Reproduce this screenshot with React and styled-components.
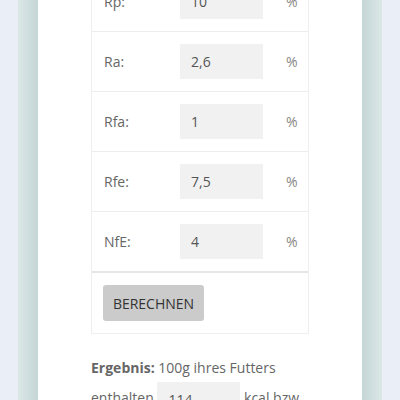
import React from 'react';
import styled, { createGlobalStyle } from 'styled-components';

const Global = createGlobalStyle`
  html, body { margin: 0; padding: 0; }
  body {
    background: #e9eef7;
    font-family: "Open Sans", "Liberation Sans", sans-serif;
    font-size: 14px;
    color: #666;
    overflow: hidden;
  }
`;

const Frame = styled.div`
  width: 364px;
  margin: 0 auto;
  padding: 0 20px;
  box-sizing: border-box;
  min-height: 400px;
  background: linear-gradient(to right,
    #dbe7e7 0, #c4d6d5 20px, transparent 20px,
    transparent calc(100% - 20px), #c4d6d5 calc(100% - 20px), #dbe7e7 100%);
`;

const Panel = styled.div`
  background: #fff;
  min-height: 400px;
  padding: 0 53px;
`;

const Table = styled.div`
  margin-top: -28px;
  border: 1px solid #eee;
  border-top: 0;
`;

const Row = styled.div`
  display: grid;
  grid-template-columns: 76px 83px 1fr;
  align-items: center;
  padding: 12px 0 12px 12px;
  border-bottom: ${p => (p.last ? '2px solid #e6e6e6' : '1px solid #eee')};
`;

const Label = styled.span`
  color: #666;
`;

const Field = styled.div`
  height: 35px;
  background: #f1f1f1;
  color: #555;
  padding-left: 11px;
  display: flex;
  align-items: center;
`;

const Unit = styled.span`
  padding-left: 23px;
  color: #888;
`;

const Actions = styled.div`
  padding: 12px 12px 12px 11px;
  height: 36px;
`;

const Button = styled.button`
  font-family: "Open Sans", "Liberation Sans", sans-serif;
  font-size: 14px;
  color: #333;
  background: #cbcbcb;
  border: 0;
  border-radius: 3px;
  height: 36px;
  width: 101px;
  padding: 0;
  text-transform: uppercase;
`;

const Result = styled.p`
  margin: 19px 0 0;
  line-height: 29px;
  color: #666;
  b { font-weight: 700; }
`;

const Inline = styled.span`
  display: inline-block;
  width: 72px;
  height: 35px;
  line-height: 35px;
  background: #f1f1f1;
  color: #555;
  padding-left: 11px;
  vertical-align: middle;
`;

const rows = [
  ['Rp:', '10'],
  ['Ra:', '2,6'],
  ['Rfa:', '1'],
  ['Rfe:', '7,5'],
  ['NfE:', '4'],
];

export default function App() {
  return (
    <>
      <Global />
      <Frame>
        <Panel>
          <Table>
            {rows.map(([l, v], i) => (
              <Row key={l} last={i === rows.length - 1}>
                <Label>{l}</Label>
                <Field>{v}</Field>
                <Unit>%</Unit>
              </Row>
            ))}
            <Actions>
              <Button>Berechnen</Button>
            </Actions>
          </Table>
          <Result>
            <b>Ergebnis:</b> 100g ihres Futters enthalten <Inline>114</Inline> kcal bzw. <Inline>477</Inline> kJ.
          </Result>
        </Panel>
      </Frame>
    </>
  );
}
